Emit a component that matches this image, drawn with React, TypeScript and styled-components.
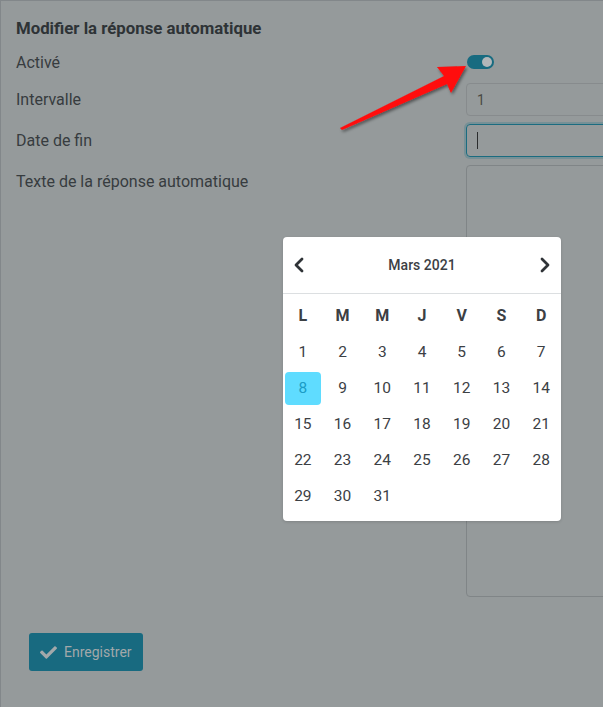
import styled, { createGlobalStyle, css } from "styled-components";
import { FaCheck } from "react-icons/fa";
import { ChevronLeft, ChevronRight } from "lucide-react";

const GlobalStyle = createGlobalStyle`
  body {
    margin: 0;
    font-family: Roboto, "Liberation Sans", sans-serif;
  }
`;

const Screen = styled.div`
  position: relative;
  width: 603px;
  height: 707px;
  overflow: hidden;
  box-sizing: border-box;
  background: #959a9b;
  border-top: 1px solid #82878a;
  border-left: 1px solid #82878a;
`;

const Form = styled.form`
  padding: 17px 0 0 15px;
`;

const Title = styled.h2`
  margin: 0 0 9px;
  font-size: 16.8px;
  line-height: 20px;
  font-weight: 700;
  color: #2e3336;
`;

const FieldGrid = styled.div`
  display: grid;
  grid-template-columns: 450px 300px;
  row-gap: 8px;
`;

const Label = styled.label`
  font-size: 16px;
  line-height: 33px;
  color: #373c3f;
`;

const SwitchLabel = styled(Label)`
  margin-top: 4px;
  line-height: 24px;
`;

const ToggleCell = styled.div`
  height: 28px;
  display: flex;
  align-items: center;
`;

const Toggle = styled.span`
  position: relative;
  display: inline-block;
  margin: 2px 0 0 1px;
  width: 27px;
  height: 14px;
  border-radius: 7px;
  background: #186b80;
  &::after {
    content: "";
    position: absolute;
    top: 2px;
    right: 2px;
    width: 10px;
    height: 10px;
    border-radius: 50%;
    background: #b3b7b9;
  }
`;

const TextInput = styled.div<{ $focused?: boolean }>`
  box-sizing: border-box;
  height: 33px;
  padding: 0 10px;
  display: flex;
  align-items: center;
  border: 1px solid #878b8d;
  border-radius: 4px;
  font-size: 14px;
  color: #4a4a44;
  ${(p) =>
    p.$focused &&
    css`
      border-color: #1b6c80;
      box-shadow: 0 0 0 2px rgba(60, 125, 140, 0.35);
    `}
`;

const Caret = styled.span`
  display: block;
  width: 1px;
  height: 17px;
  background: #2b2d2e;
`;

const TextArea = styled.div`
  box-sizing: border-box;
  height: 432px;
  border: 1px solid #808587;
  border-radius: 4px;
`;

const SaveButton = styled.button`
  margin: 36px 0 0 13px;
  height: 38px;
  width: 114px;
  padding: 0 0 0 11px;
  display: inline-flex;
  align-items: center;
  gap: 7px;
  border: none;
  border-radius: 3px;
  background: #186a80;
  color: #a2a8aa;
  font-family: Roboto, "Liberation Sans", sans-serif;
  font-size: 14px;
  svg {
    width: 17px;
    height: 17px;
  }
`;

const Arrow = styled.svg`
  position: absolute;
  left: 330px;
  top: 49px;
  overflow: visible;
`;

const Picker = styled.div`
  position: absolute;
  left: 282px;
  top: 236px;
  width: 278px;
  height: 284px;
  box-sizing: border-box;
  background: #fff;
  border-radius: 4px;
  box-shadow: 0 1px 3px rgba(0, 0, 0, 0.15);
  color: #3c4044;
`;

const PickerHead = styled.div`
  height: 56px;
  padding: 0 4px;
  display: flex;
  align-items: center;
  justify-content: space-between;
  border-bottom: 1px solid #dcdfe1;
  svg {
    color: #2f3337;
  }
`;

const Month = styled.span`
  font-size: 14px;
  font-weight: 500;
`;

const DayGrid = styled.div`
  padding-top: 2px;
  display: grid;
  grid-template-columns: repeat(7, 1fr);
  grid-template-rows: 38px;
  grid-auto-rows: 36px;
`;

const DayCell = styled.div<{ $weekday?: boolean; $selected?: boolean }>`
  margin: 1.5px 1.5px;
  display: flex;
  align-items: center;
  justify-content: center;
  border-radius: 4px;
  font-size: ${(p) => (p.$weekday ? 16 : 15.5)}px;
  font-weight: ${(p) => (p.$weekday ? 700 : 400)};
  ${(p) =>
    p.$selected &&
    css`
      background: #5fdcff;
      color: #1b9cc6;
    `}
`;

const weekdays = ["L", "M", "M", "J", "V", "S", "D"];
const days = Array.from({ length: 31 }, (_, i) => i + 1);

export default function App() {
  return (
    <Screen>
      <GlobalStyle />
      <Form>
        <Title>Modifier la réponse automatique</Title>
        <FieldGrid>
          <SwitchLabel>Activé</SwitchLabel>
          <ToggleCell>
            <Toggle />
          </ToggleCell>

          <Label>Intervalle</Label>
          <TextInput>1</TextInput>

          <Label>Date de fin</Label>
          <TextInput $focused>
            <Caret />
          </TextInput>

          <Label>Texte de la réponse automatique</Label>
          <TextArea />
        </FieldGrid>
        <SaveButton type="button">
          <FaCheck />
          Enregistrer
        </SaveButton>
      </Form>

      <Arrow width="145" height="90" viewBox="0 0 145 90">
        <defs>
          <filter id="arrowShadow" x="-20%" y="-20%" width="140%" height="140%">
            <feDropShadow dx="1.5" dy="2" stdDeviation="1.5" floodColor="#000" floodOpacity="0.45" />
          </filter>
        </defs>
        <polygon
          points="9,78 113,26 106,17 135,16 120,43 116,34 11,80"
          fill="#ff0a0a"
          filter="url(#arrowShadow)"
        />
      </Arrow>

      <Picker>
        <PickerHead>
          <ChevronLeft size={24} strokeWidth={2.8} />
          <Month>Mars 2021</Month>
          <ChevronRight size={24} strokeWidth={2.8} />
        </PickerHead>
        <DayGrid>
          {weekdays.map((d, i) => (
            <DayCell key={`w${i}`} $weekday>
              {d}
            </DayCell>
          ))}
          {days.map((d) => (
            <DayCell key={d} $selected={d === 8}>
              {d}
            </DayCell>
          ))}
        </DayGrid>
      </Picker>
    </Screen>
  );
}
